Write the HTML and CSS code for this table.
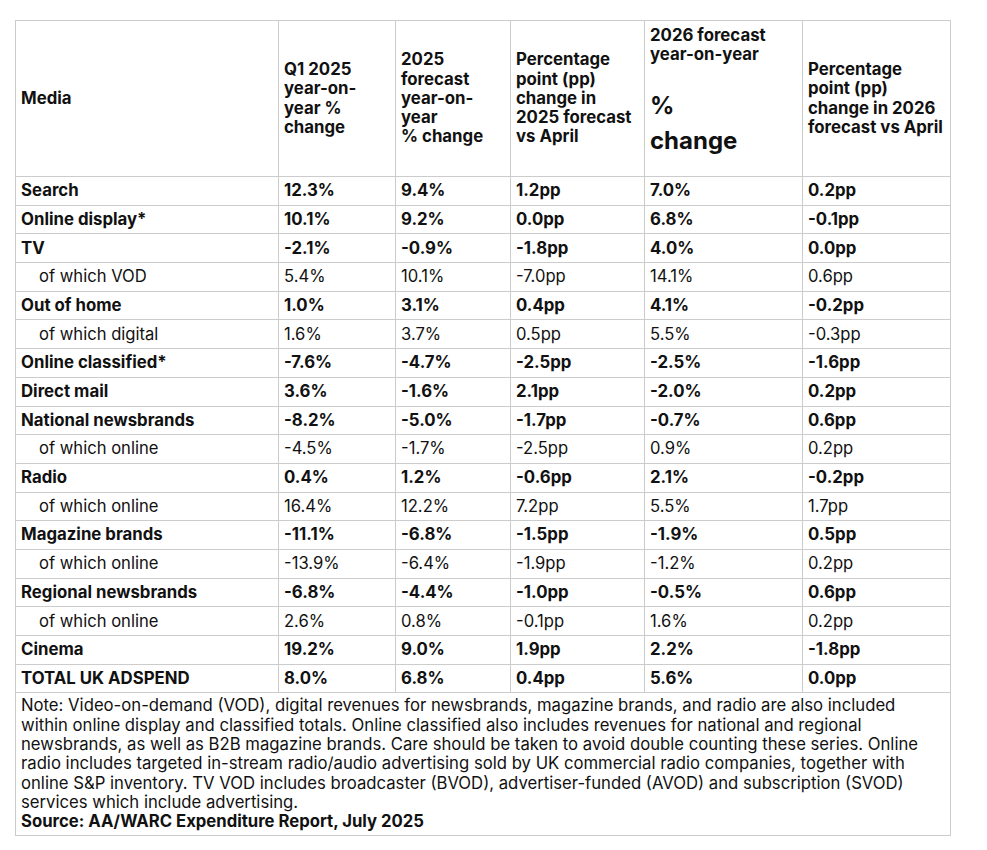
FILE: index.html
```html
<!DOCTYPE html>
<html lang="en">
<head>
<meta charset="utf-8">
<title>UK adspend forecast</title>
<link rel="stylesheet" href="styles.css">
</head>
<body>
<div class="wrap">
<table class="ads">
  <colgroup>
    <col class="c-media"><col class="c-q1"><col class="c-f25"><col class="c-pp25"><col class="c-f26"><col class="c-pp26">
  </colgroup>
  <thead>
    <tr class="head">
      <th>Media</th>
      <th>Q1 2025 year-on-year % change</th>
      <th>2025 forecast year-on-year<br>% change</th>
      <th>Percentage point (pp) change in 2025 forecast vs April</th>
      <th class="big-head"><div class="bh-top">2026 forecast year-on-year</div><div class="bh-pct">%</div><div class="bh-chg">change</div></th>
      <th>Percentage point (pp) change in 2026 forecast vs April</th>
    </tr>
  </thead>
  <tbody>
    <tr class="main"><td>Search</td><td>12.3%</td><td>9.4%</td><td>1.2pp</td><td>7.0%</td><td>0.2pp</td></tr>
    <tr class="main"><td>Online display*</td><td>10.1%</td><td>9.2%</td><td>0.0pp</td><td>6.8%</td><td>-0.1pp</td></tr>
    <tr class="main"><td>TV</td><td>-2.1%</td><td>-0.9%</td><td>-1.8pp</td><td>4.0%</td><td>0.0pp</td></tr>
    <tr class="sub"><td>of which VOD</td><td>5.4%</td><td>10.1%</td><td>-7.0pp</td><td>14.1%</td><td>0.6pp</td></tr>
    <tr class="main"><td>Out of home</td><td>1.0%</td><td>3.1%</td><td>0.4pp</td><td>4.1%</td><td>-0.2pp</td></tr>
    <tr class="sub"><td>of which digital</td><td>1.6%</td><td>3.7%</td><td>0.5pp</td><td>5.5%</td><td>-0.3pp</td></tr>
    <tr class="main"><td>Online classified*</td><td>-7.6%</td><td>-4.7%</td><td>-2.5pp</td><td>-2.5%</td><td>-1.6pp</td></tr>
    <tr class="main"><td>Direct mail</td><td>3.6%</td><td>-1.6%</td><td>2.1pp</td><td>-2.0%</td><td>0.2pp</td></tr>
    <tr class="main"><td>National newsbrands</td><td>-8.2%</td><td>-5.0%</td><td>-1.7pp</td><td>-0.7%</td><td>0.6pp</td></tr>
    <tr class="sub"><td>of which online</td><td>-4.5%</td><td>-1.7%</td><td>-2.5pp</td><td>0.9%</td><td>0.2pp</td></tr>
    <tr class="main"><td>Radio</td><td>0.4%</td><td>1.2%</td><td>-0.6pp</td><td>2.1%</td><td>-0.2pp</td></tr>
    <tr class="sub"><td>of which online</td><td>16.4%</td><td>12.2%</td><td>7.2pp</td><td>5.5%</td><td>1.7pp</td></tr>
    <tr class="main"><td>Magazine brands</td><td>-11.1%</td><td>-6.8%</td><td>-1.5pp</td><td>-1.9%</td><td>0.5pp</td></tr>
    <tr class="sub"><td>of which online</td><td>-13.9%</td><td>-6.4%</td><td>-1.9pp</td><td>-1.2%</td><td>0.2pp</td></tr>
    <tr class="main"><td>Regional newsbrands</td><td>-6.8%</td><td>-4.4%</td><td>-1.0pp</td><td>-0.5%</td><td>0.6pp</td></tr>
    <tr class="sub"><td>of which online</td><td>2.6%</td><td>0.8%</td><td>-0.1pp</td><td>1.6%</td><td>0.2pp</td></tr>
    <tr class="main"><td>Cinema</td><td>19.2%</td><td>9.0%</td><td>1.9pp</td><td>2.2%</td><td>-1.8pp</td></tr>
    <tr class="main"><td>TOTAL UK ADSPEND</td><td>8.0%</td><td>6.8%</td><td>0.4pp</td><td>5.6%</td><td>0.0pp</td></tr>
    <tr class="note-row">
      <td colspan="6">Note: Video-on-demand (VOD), digital revenues for newsbrands, magazine brands, and radio are also included within online display and classified totals. Online classified also includes revenues for national and regional newsbrands, as well as B2B magazine brands. Care should be taken to avoid double counting these series. Online radio includes targeted in-stream radio/audio advertising sold by UK commercial radio companies, together with online S&amp;P inventory. TV VOD includes broadcaster (BVOD), advertiser-funded (AVOD) and subscription (SVOD) services which include advertising.<br><strong>Source: AA/WARC Expenditure Report, July 2025</strong></td>
    </tr>
  </tbody>
</table>
</div>
</body>
</html>
```

FILE: styles.css
```css
html, body {
  margin: 0;
  padding: 0;
  background: #ffffff;
}

body {
  font-family: Inter, "Noto Sans", "Liberation Sans", sans-serif;
  color: #111111;
}

.wrap {
  padding: 20px 0 0 15px;
}

.ads {
  border-collapse: collapse;
  table-layout: fixed;
  width: 935px;
}

.c-media { width: 263px; }
.c-q1 { width: 117px; }
.c-f25 { width: 115px; }
.c-pp25 { width: 134px; }
.c-f26 { width: 158px; }
.c-pp26 { width: 148px; }

.ads th,
.ads td {
  border: 1px solid #cccccc;
  padding: 0 5px;
  text-align: left;
  font-size: 16.8px;
  line-height: 19.3px;
}

.ads th {
  font-weight: 700;
  vertical-align: middle;
}

.head {
  height: 156px;
}

.big-head {
  vertical-align: top !important;
  padding-top: 5px !important;
}

.bh-pct,
.bh-chg {
  font-size: 24px;
  line-height: 35px;
}

.bh-pct {
  margin-top: 23px;
}

.ads tbody tr.main,
.ads tbody tr.sub {
  height: 28.7px;
}

.main td {
  font-weight: 700;
}

.sub td {
  font-weight: 400;
  font-size: 16.6px;
}

.sub td:first-child {
  padding-left: 23px;
}

.note-row td {
  padding: 3px 5px 4px;
  font-size: 16.7px;
  line-height: 19.3px;
  vertical-align: top;
}

.note-row strong {
  font-weight: 700;
}
```
